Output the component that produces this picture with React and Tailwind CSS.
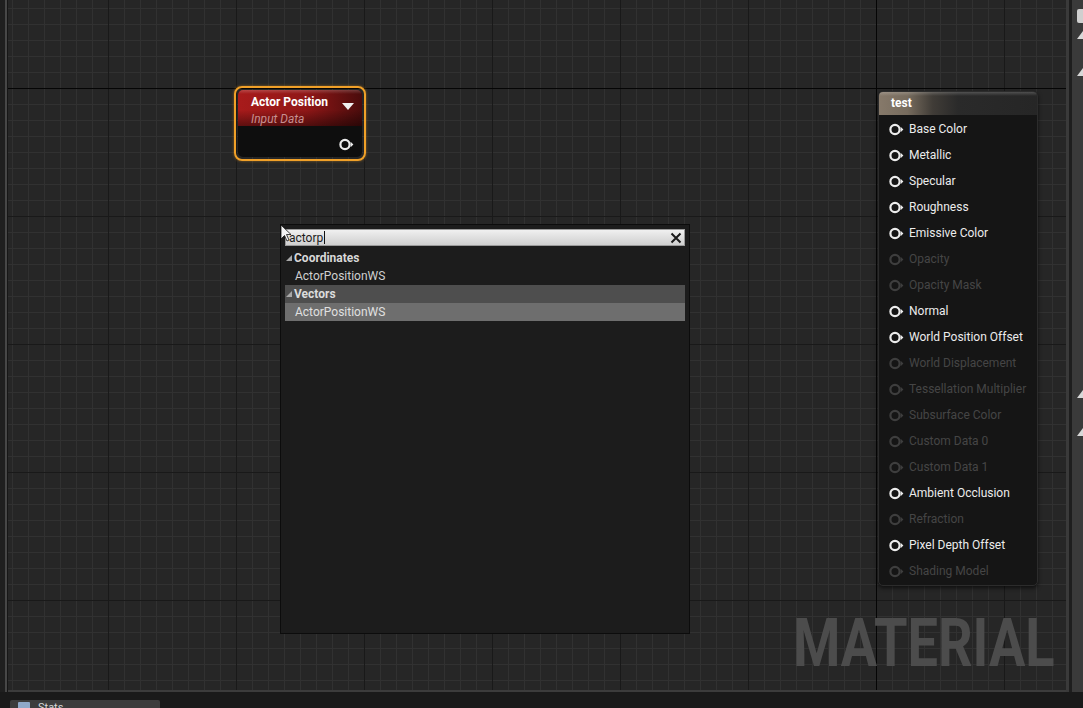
import React from "react";

const font = { fontFamily: "Roboto, 'Open Sans', sans-serif" };

function Pin({ color = "#ececec" }) {
  return (
    <svg width="15" height="13" viewBox="0 0 15 13" className="shrink-0">
      <circle cx="6" cy="6.5" r="4.6" fill="none" stroke={color} strokeWidth="2.2" />
      <path d="M11.6 3.8 L14.4 6.5 L11.6 9.2 Z" fill={color} />
    </svg>
  );
}

function Grid() {
  return (
    <svg className="absolute inset-0" width="1058" height="692">
      <defs>
        <pattern id="minor" x="4" y="8" width="16" height="16" patternUnits="userSpaceOnUse">
          <rect x="0" y="0" width="1" height="16" fill="#313131" />
          <rect x="0" y="0" width="16" height="1" fill="#313131" />
        </pattern>
        <pattern id="major" x="100" y="88" width="128" height="128" patternUnits="userSpaceOnUse">
          <rect x="0" y="0" width="1" height="128" fill="#191919" />
          <rect x="0" y="0" width="128" height="1" fill="#191919" />
        </pattern>
      </defs>
      <rect width="1058" height="692" fill="#262626" />
      <rect width="1058" height="692" fill="url(#minor)" />
      <rect width="1058" height="692" fill="url(#major)" />
      <rect x="868" y="0" width="1" height="692" fill="#050505" />
      <rect x="0" y="88" width="1058" height="1" fill="#050505" />
    </svg>
  );
}

const pins = [
  ["Base Color", true],
  ["Metallic", true],
  ["Specular", true],
  ["Roughness", true],
  ["Emissive Color", true],
  ["Opacity", false],
  ["Opacity Mask", false],
  ["Normal", true],
  ["World Position Offset", true],
  ["World Displacement", false],
  ["Tessellation Multiplier", false],
  ["Subsurface Color", false],
  ["Custom Data 0", false],
  ["Custom Data 1", false],
  ["Ambient Occlusion", true],
  ["Refraction", false],
  ["Pixel Depth Offset", true],
  ["Shading Model", false],
];

function ActorNode() {
  return (
    <div className="absolute left-[226px] top-[86px] w-[132px] h-[75px] rounded-[8px] border-2 border-[#f0a028] p-[2px] shadow-[0_0_3px_#f0a02880]">
      <div className="flex h-full flex-col overflow-hidden rounded-[5px] bg-[#0e0e0e]">
        <div className="relative h-[36px] bg-[linear-gradient(90deg,#a81b1b_0%,#901717_55%,#4a0c0c_100%)]">
          <div className="absolute inset-x-0 top-0 h-[4px] bg-[linear-gradient(180deg,#ffffff30,transparent)]" />
          <div className="absolute inset-x-0 bottom-0 h-[16px] bg-[linear-gradient(180deg,transparent,#00000070)]" />
          <div className="absolute left-[13px] top-[5px] text-[12px] font-bold leading-[14px] text-white">Actor Position</div>
          <div className="absolute left-[13px] top-[22px] text-[12px] italic leading-[14px] text-[#c79090]">Input Data</div>
          <svg className="absolute left-[104px] top-[13px]" width="12" height="8" viewBox="0 0 12 8">
            <path d="M0 0 L12 0 L6 7 Z" fill="#f0f0f0" />
          </svg>
        </div>
        <div className="flex flex-1 items-center justify-end pr-[8px] pt-[6px]">
          <Pin />
        </div>
      </div>
    </div>
  );
}

function ResultNode() {
  return (
    <div className="absolute left-[870px] top-[91px] w-[160px] h-[495px] overflow-hidden rounded-[5px] border border-[#2c2c2c] bg-[#151515] shadow-[0_2px_4px_#000000a0]">
      <div className="relative h-[23px] bg-[linear-gradient(90deg,#86796a_0%,#776c5e_18%,#403c37_34%,#2a2a2a_50%,#262626_100%)]">
        <div className="absolute inset-x-0 top-0 h-[4px] bg-[linear-gradient(180deg,#ffffff30,transparent)]" />
        <div className="absolute left-[12px] top-[4px] text-[12px] font-bold leading-[14px] text-white">test</div>
      </div>
      <div className="flex flex-col pt-[1px]">
        {pins.map(([name, on]) => (
          <div key={name} className="flex h-[26px] items-center gap-[5px] pl-[10px]">
            <Pin color={on ? "#ececec" : "#3e3e3e"} />
            <span className={"text-[12px] leading-[14px] " + (on ? "text-[#ececec]" : "text-[#454545]")}>{name}</span>
          </div>
        ))}
      </div>
    </div>
  );
}

function Tri() {
  return (
    <svg width="6" height="6" viewBox="0 0 6 6" className="shrink-0">
      <path d="M6 0 L6 6 L0 6 Z" fill="#a8a8a8" />
    </svg>
  );
}

function SearchPopup() {
  return (
    <div className="absolute left-[272px] top-[224px] w-[410px] h-[410px] border border-[#0c0c0c] bg-[#1c1c1c] p-[4px]">
      <div className="relative flex h-[17px] items-center border border-[#9a9a9a] bg-[linear-gradient(180deg,#f0f0f0,#cfcfcf)] pl-[3px]">
        <span className="text-[12px] leading-[14px] text-[#1c1c1c]">actorp</span>
        <span className="ml-[1px] h-[13px] w-[1px] bg-[#111]" />
        <svg className="absolute right-[2px] top-[2px]" width="12" height="12" viewBox="0 0 12 12">
          <path d="M1.5 1.5 L10.5 10.5 M10.5 1.5 L1.5 10.5" stroke="#1a1a1a" strokeWidth="2" />
        </svg>
      </div>
      <div className="mt-[3px] flex flex-col">
        <div className="flex h-[18px] items-center gap-[2px] pl-[1px]">
          <Tri />
          <span className="text-[12px] font-bold leading-[14px] text-[#d8d8d8]">Coordinates</span>
        </div>
        <div className="flex h-[18px] items-center pl-[10px]">
          <span className="text-[12px] leading-[14px] text-[#d0d0d0]">ActorPositionWS</span>
        </div>
        <div className="flex h-[18px] items-center gap-[2px] bg-[#4e4e4e] pl-[1px]">
          <Tri />
          <span className="text-[12px] font-bold leading-[14px] text-[#dcdcdc]">Vectors</span>
        </div>
        <div className="flex h-[18px] items-center bg-[#6e6e6e] pl-[10px]">
          <span className="text-[12px] leading-[14px] text-[#e0e0e0]">ActorPositionWS</span>
        </div>
      </div>
    </div>
  );
}

function Cursor() {
  return (
    <svg className="absolute left-[272px] top-[224px]" width="12" height="18" viewBox="0 0 12 18">
      <path d="M1 1 L1 15 L4.5 11.5 L7 17 L9 16 L6.5 10.5 L11 10.5 Z" fill="#f4f4f4" stroke="#111" strokeWidth="0.8" />
    </svg>
  );
}

export default function App() {
  return (
    <div className="flex h-[708px] w-[1083px] flex-col overflow-hidden bg-[#1c1c1c]" style={font}>
      <div className="flex h-[692px]">
        <div className="flex w-[8px] shrink-0">
          <div className="w-[5px] bg-[#1f1f1f]" />
          <div className="w-[2px] bg-[#474747]" />
          <div className="w-[1px] bg-[#161616]" />
        </div>
        <div className="relative flex-1 overflow-hidden border-b-2 border-[#3c3c3c]">
          <Grid />
          <ActorNode />
          <ResultNode />
          <SearchPopup />
          <Cursor />
          <div className="absolute left-[785px] top-[611px] origin-left scale-x-[0.82] whitespace-nowrap text-[66px] font-bold leading-none text-[#4c4c4c]">
            MATERIAL
          </div>
        </div>
        <div className="flex w-[17px] shrink-0">
          <div className="w-[3px] bg-[#3a3a3a]" />
          <div className="w-[3px] bg-[#1e1e1e]" />
          <div className="relative flex-1 bg-[#3a3a3a]">
            <div className="absolute left-[5px] top-[9px] h-[14px] w-[8px] rounded-[2px] bg-[#cfcfcf]" />
            <svg className="absolute left-[5px] top-[31px]" width="6" height="8" viewBox="0 0 6 8"><path d="M6 0 L6 8 L0 8 Z" fill="#d8d8d8" /></svg>
            <svg className="absolute left-[5px] top-[68px]" width="6" height="8" viewBox="0 0 6 8"><path d="M6 0 L6 8 L0 8 Z" fill="#d8d8d8" /></svg>
            <svg className="absolute left-[5px] top-[390px]" width="6" height="8" viewBox="0 0 6 8"><path d="M6 0 L6 8 L0 8 Z" fill="#d8d8d8" /></svg>
            <svg className="absolute left-[5px] top-[428px]" width="6" height="8" viewBox="0 0 6 8"><path d="M6 0 L6 8 L0 8 Z" fill="#d8d8d8" /></svg>
          </div>
        </div>
      </div>
      <div className="flex h-[16px] items-end bg-[#1a1a1a] pl-[10px]">
        <div className="flex h-[8px] w-[150px] items-start gap-[8px] overflow-hidden rounded-t-[2px] bg-[#3c3c3c] pl-[8px] pt-[2px]">
          <div className="h-[10px] w-[12px] shrink-0 rounded-[1px] bg-[#8fa8c8]" />
          <span className="text-[11px] leading-[12px] text-[#d8d8d8]">Stats</span>
        </div>
      </div>
    </div>
  );
}
